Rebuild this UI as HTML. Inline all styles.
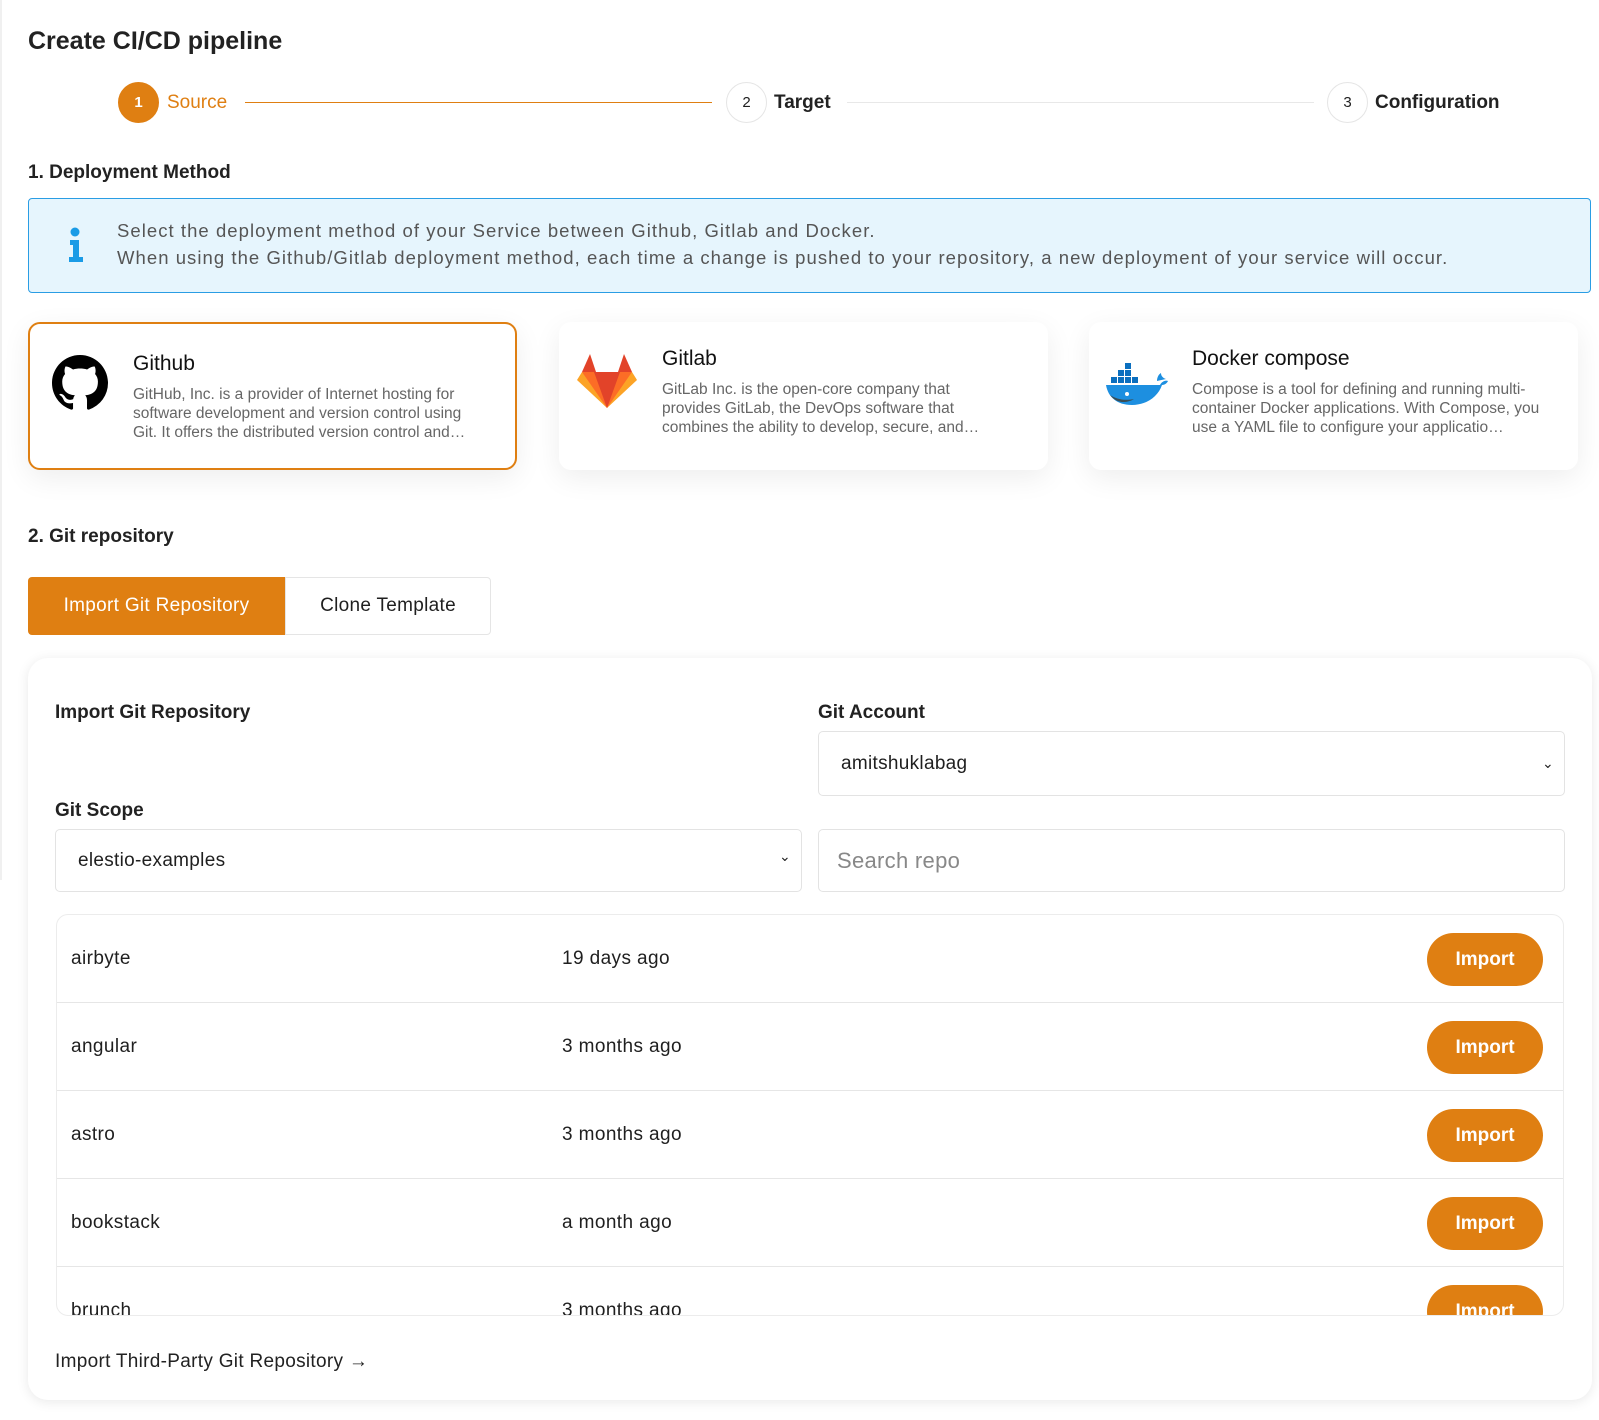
<!DOCTYPE html>
<html><head><meta charset="utf-8"><style>
*{box-sizing:border-box;margin:0;padding:0}
body{width:1599px;height:1420px;background:#fff;font-family:"Liberation Sans",sans-serif;color:#1f1f1f;position:relative;overflow:hidden}
.a{position:absolute}
.h1{left:28px;top:27px;font-size:25px;font-weight:bold;color:#222}
.circ{width:41px;height:41px;border-radius:50%;display:flex;align-items:center;justify-content:center;font-size:15px;top:82px;background:#fff;border:1px solid #e5e5e5}
.step{top:92px;font-size:19px;font-weight:bold;color:#222}
.line{height:1px;top:102px}
.sec{font-size:19px;font-weight:bold;color:#222}
.info{left:28px;top:198px;width:1563px;height:95px;background:#e6f5fd;border:1px solid #2a9de4;border-radius:4px}
.info p{position:absolute;left:88px;font-size:18.5px;color:#555;letter-spacing:1.05px}
.card{top:322px;width:489px;height:148px;background:#fff;border-radius:12px;box-shadow:0 8px 28px rgba(0,0,0,.07)}
.card .t{position:absolute;left:103px;top:28px;font-size:21px;color:#111}
.card .d{position:absolute;left:103px;top:61px;width:350px;font-size:15.5px;line-height:19px;color:#666;height:57px;overflow:hidden}
.main{left:28px;top:658px;width:1564px;height:742px;border-radius:20px;box-shadow:0 2px 12px rgba(0,0,0,.09);background:#fff}
.lbl{font-size:19px;font-weight:bold;color:#222}
.sel{border:1px solid #e3e3e3;border-radius:5px;font-size:19px;display:flex;align-items:center;padding-left:22px;letter-spacing:.3px}
.row{position:absolute;left:0;width:1508px;height:88px;border-bottom:1px solid #e6e6e6;font-size:19px;letter-spacing:.4px}
.row span{position:absolute;top:33px}
.btn{position:absolute;left:1370px;top:18px;width:116px;height:53px;border-radius:27px;background:#df7f12;color:#fff;font-size:19px;font-weight:bold;display:flex;align-items:center;justify-content:center;letter-spacing:0}
</style></head><body>
<div class="a" style="left:0;top:0;width:2px;height:880px;background:#f0f0f0"></div>
<div class="a h1">Create CI/CD pipeline</div>

<div class="a circ" style="left:118px;background:#df7f12;border-color:#df7f12;color:#fff;font-weight:bold">1</div>
<div class="a step" style="left:167px;color:#df7f12;font-weight:normal">Source</div>
<div class="a line" style="left:245px;width:467px;background:#df7f12"></div>
<div class="a circ" style="left:726px">2</div>
<div class="a step" style="left:774px">Target</div>
<div class="a line" style="left:847px;width:467px;background:#e8e8e8"></div>
<div class="a circ" style="left:1327px">3</div>
<div class="a step" style="left:1375px">Configuration</div>

<div class="a sec" style="left:28px;top:162px">1. Deployment Method</div>
<div class="a info">
<svg class="a" style="left:38px;top:28px" width="18" height="36" viewBox="0 0 18 36"><circle cx="8" cy="5" r="4.5" fill="#1a9be6"/><path d="M3 13h9v17h4v5H2v-5h4V18H3z" fill="#1a9be6"/></svg>
<p style="top:21px">Select the deployment method of your Service between Github, Gitlab and Docker.</p>
<p style="top:48px">When using the Github/Gitlab deployment method, each time a change is pushed to your repository, a new deployment of your service will occur.</p>
</div>

<div class="a card" style="left:28px;border:2px solid #df7f12">
<svg class="a" style="left:22px;top:31px" width="56" height="56" viewBox="0 0 16 16"><path fill="#000" d="M8 0C3.58 0 0 3.58 0 8c0 3.540 2.29 6.53 5.47 7.59.4.07.55-.17.55-.38 0-.19-.01-.82-.01-1.49-2.01.37-2.53-.49-2.690-.94-.09-.23-.48-.94-.82-1.13-.28-.15-.68-.52-.01-.53.63-.01 1.08.58 1.23.82.72 1.21 1.87.87 2.33.66.07-.52.28-.87.51-1.07-1.78-.2-3.640-.89-3.640-3.95 0-.87.31-1.59.82-2.15-.08-.2-.36-1.02.08-2.12 0 0 .67-.21 2.2.82.64-.18 1.32-.27 2-.27.68 0 1.36.09 2 .27 1.53-1.04 2.2-.82 2.2-.82.44 1.1.16 1.92.08 2.12.51.56.82 1.27.82 2.15 0 3.07-1.87 3.75-3.65 3.95.29.25.54.73.54 1.48 0 1.07-.01 1.93-.01 2.2 0 .21.15.46.55.38A8.013 8.013 0 0016 8c0-4.42-3.58-8-8-8z"/></svg>
<div class="t">Github</div>
<div class="d">GitHub, Inc. is a provider of Internet hosting for software development and version control using Git. It offers the distributed version control and…</div>
</div>
<div class="a card" style="left:559px">
<svg class="a" style="left:18px;top:32px" width="60" height="55" viewBox="0 0 60 55"><path d="M30 54L0 26l5-8h50l5 8z" fill="#fca326"/><path d="M30 54L5 18h50z" fill="#fc6d26"/><path d="M30 54L17 18h26z" fill="#e24329"/><path d="M5 18L13 0l6 18z" fill="#e24329"/><path d="M55 18L47 0l-6 18z" fill="#e24329"/></svg>
<div class="t" style="top:25px">Gitlab</div>
<div class="d" style="top:58px">GitLab Inc. is the open-core company that provides GitLab, the DevOps software that combines the ability to develop, secure, and…</div>
</div>
<div class="a card" style="left:1089px">
<svg class="a" style="left:16px;top:40px" width="64" height="46" viewBox="0 0 64 46"><path d="M1 23h54c2-4 6-5 8-4-1 2-3 4-6 4-4 12-16 20-30 20C12 43 3 35 1 23z" fill="#1d8fe0"/><path d="M5 33c6 4 14 6 24 4-8 5-18 4-24-4z" fill="#394d54"/><circle cx="22" cy="32" r="2" fill="#fff"/><g fill="#0b6fbf"><rect x="6" y="15" width="6" height="6"/><rect x="13" y="15" width="6" height="6"/><rect x="20" y="15" width="6" height="6"/><rect x="27" y="15" width="6" height="6"/><rect x="13" y="8" width="6" height="6"/><rect x="20" y="8" width="6" height="6"/><rect x="20" y="1" width="6" height="6"/></g><path d="M52 19c0-4 2-7 4-8 0 3 2 5 5 6z" fill="#1d8fe0"/></svg>
<div class="t" style="top:25px">Docker compose</div>
<div class="d" style="top:58px;width:352px">Compose is a tool for defining and running multi-container Docker applications. With Compose, you use a YAML file to configure your applicatio…</div>
</div>

<div class="a sec" style="left:28px;top:526px">2. Git repository</div>
<div class="a" style="left:28px;top:577px;width:257px;height:58px;background:#df7f12;color:#fff;font-size:19px;display:flex;align-items:center;justify-content:center;border-radius:4px 0 0 4px;letter-spacing:.3px">Import Git Repository</div>
<div class="a" style="left:285px;top:577px;width:206px;height:58px;border:1px solid #e5e5e5;font-size:19px;display:flex;align-items:center;justify-content:center;border-radius:0 4px 4px 0;letter-spacing:.3px">Clone Template</div>

<div class="a main">
<div class="a lbl" style="left:27px;top:44px">Import Git Repository</div>
<div class="a lbl" style="left:790px;top:44px">Git Account</div>
<div class="a sel" style="left:790px;top:73px;width:747px;height:65px">amitshuklabag<span style="position:absolute;right:10px;font-size:14px">&#8964;</span></div>
<div class="a lbl" style="left:27px;top:142px">Git Scope</div>
<div class="a sel" style="left:27px;top:171px;width:747px;height:63px">elestio-examples<span style="position:absolute;right:10px;font-size:14px;top:18px">&#8964;</span></div>
<div class="a sel" style="left:790px;top:171px;width:747px;height:63px;font-size:22px;color:#888;padding-left:18px">Search repo</div>
<div class="a" style="left:28px;top:256px;width:1508px;height:402px;overflow:hidden;border:1px solid #ececec;border-radius:12px">
<div class="row" style="top:0"><span style="left:14px">airbyte</span><span style="left:505px">19 days ago</span><div class="btn">Import</div></div>
<div class="row" style="top:88px"><span style="left:14px">angular</span><span style="left:505px">3 months ago</span><div class="btn">Import</div></div>
<div class="row" style="top:176px"><span style="left:14px">astro</span><span style="left:505px">3 months ago</span><div class="btn">Import</div></div>
<div class="row" style="top:264px"><span style="left:14px">bookstack</span><span style="left:505px">a month ago</span><div class="btn">Import</div></div>
<div class="row" style="top:352px"><span style="left:14px">brunch</span><span style="left:505px">3 months ago</span><div class="btn">Import</div></div>
</div>
<div class="a" style="left:27px;top:693px;font-size:19px;color:#222;letter-spacing:.3px">Import Third-Party Git Repository →</div>
</div>
</body></html>
